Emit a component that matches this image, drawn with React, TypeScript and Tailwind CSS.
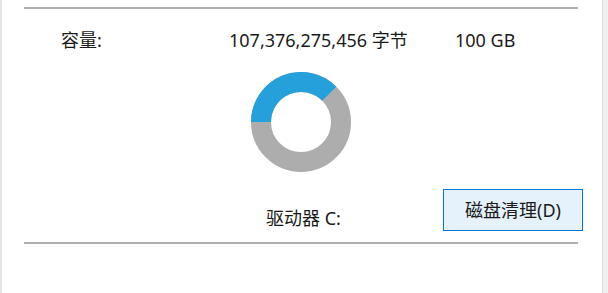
// Drive properties — capacity panel (General tab, lower half)

const uiFont = { fontFamily: '"Noto Sans", "Noto Sans CJK SC", sans-serif' };

// ─── Usage donut ──────────────────────────────────────────────────────────────

function UsageDonut() {
  return (
    <svg width="100" height="100" viewBox="0 0 100 100">
      <circle cx="50" cy="50" r="40" fill="none" stroke="#adadad" strokeWidth="20" />
      <path d="M10 50 A40 40 0 0 1 78.28 21.72" fill="none" stroke="#26a0da" strokeWidth="20" />
    </svg>
  );
}

function Separator() {
  return <div className="w-[554px] h-[2px] bg-[#b0b0b0]" />;
}

export default function App() {
  return (
    <div className="flex w-[608px] h-[293px] bg-white text-[18px] text-[#1a1a1a]" style={uiFont}>
      <div className="w-[2px] bg-[#e6e6e6]" />

      <div className="flex-1 flex flex-col pl-[22px] pt-[7px]">
        <Separator />

        {/* capacity */}
        <div className="flex mt-[19px] pl-[37px] leading-[24px]">
          <span className="w-[168px]">容量:</span>
          <span className="w-[226px]">107,376,275,456 字节</span>
          <span>100 GB</span>
        </div>

        <div className="ml-[227px] mt-[20px]">
          <UsageDonut />
        </div>

        {/* drive + cleanup */}
        <div className="flex items-end mt-[17px] pl-[242px]">
          <span className="w-[177px] leading-[24px] mb-[1px]">驱动器 C:</span>
          <button
            type="button"
            className="w-[140px] h-[42px] border border-[#0078d7] bg-[#e5f1fb] text-[18px] leading-none"
          >
            磁盘清理(D)
          </button>
        </div>

        <div className="mt-[11px]">
          <Separator />
        </div>
      </div>

      <div className="w-[6px] border-l border-[#dcdcdc] bg-[#f0f0f0]" />
    </div>
  );
}
